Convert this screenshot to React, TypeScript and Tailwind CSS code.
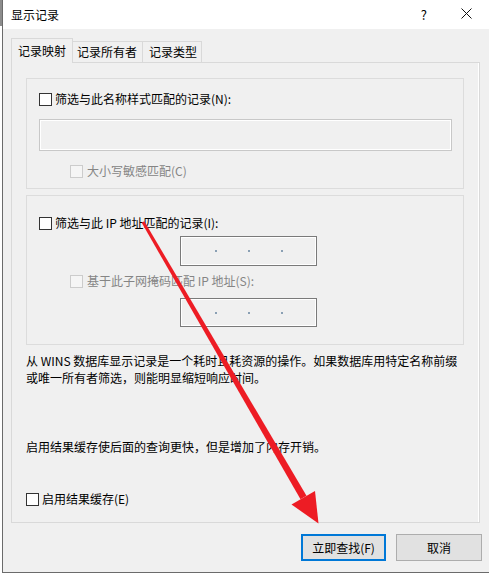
import React from "react";

function Check({ disabled = false }: { disabled?: boolean }) {
  return (
    <span
      className={
        disabled
          ? "block w-[13px] h-[13px] border border-[#cccccc] bg-[#f5f5f5] shrink-0"
          : "block w-[13px] h-[13px] border border-[#333333] bg-white shrink-0"
      }
    />
  );
}

function IpBox({ h }: { h: string }) {
  return (
    <div
      className={`w-[137px] ${h} border border-[#7a7a7a] bg-[#f0f0f0] shadow-[inset_0_0_0_1px_#ffffff] flex items-center`}
    >
      <span className="block w-[2px] h-[2px] bg-[#8aa0b4] ml-[34px]" />
      <span className="block w-[2px] h-[2px] bg-[#8aa0b4] ml-[31px]" />
      <span className="block w-[2px] h-[2px] bg-[#8aa0b4] ml-[31px]" />
    </div>
  );
}

export default function App() {
  return (
    <div className="relative w-[489px] h-[574px] bg-white overflow-hidden font-['Noto_Sans_CJK_SC','Noto_Sans',sans-serif] text-[12px] leading-[16px] text-black">
      <div className="flex h-[573px]">
        {/* background window sliver */}
        <div className="w-[2px] flex flex-col">
          <div className="h-[26px] bg-[#8c8c8c]" />
          <div className="flex-1 bg-white" />
        </div>
        {/* dialog */}
        <div className="flex-1 flex flex-col border-l border-b border-[#6b6b6b] bg-[#f0f0f0]">
          {/* title bar */}
          <div className="h-[29px] bg-white flex items-center pl-[8px] shrink-0">
            <span className="text-[12px]">显示记录</span>
            <span className="ml-auto text-[13px] mr-[34px]">?</span>
            <svg width="11" height="11" viewBox="0 0 11 11" className="mr-[17px] mb-[2px]">
              <path d="M0.5 0.5 L10.5 10.5 M10.5 0.5 L0.5 10.5" stroke="#111" strokeWidth="1" />
            </svg>
          </div>
          {/* body */}
          <div className="flex-1 flex flex-col pt-[9px] pl-[8px] pr-[9px]">
            {/* tabs */}
            <div className="flex items-end h-[24px] relative z-10">
              <div className="w-[62px] h-[25px] -mb-[1px] bg-[#f0f0f0] border-l border-t border-r border-[#d9d9d9] pl-[6px] flex items-center pb-[1px]">
                记录映射
              </div>
              <div className="w-[70px] h-[21px] border-t border-r border-[#d9d9d9] pl-[4px] flex items-center">
                记录所有者
              </div>
              <div className="w-[59px] h-[21px] border-t border-r border-[#d9d9d9] pl-[6px] flex items-center">
                记录类型
              </div>
            </div>
            {/* panel */}
            <div className="h-[461px] border border-[#d9d9d9] shadow-[inset_-1px_0_0_#ffffff] pt-[15px] pl-[14px] flex flex-col">
              {/* group 1 */}
              <div className="w-[438px] h-[111px] border border-[#dcdcdc] pt-[12px] pl-[12px] flex flex-col">
                <div className="flex items-center h-[16px]">
                  <Check />
                  <span className="ml-[3px] whitespace-nowrap">筛选与此名称样式匹配的记录(N):</span>
                </div>
                <div className="mt-[12px] w-[413px] h-[32px] border border-[#c8c8c8] shadow-[inset_0_0_0_1px_#ffffff] bg-[#f0f0f0]" />
                <div className="mt-[12px] flex items-center h-[16px] pl-[31px]">
                  <Check disabled />
                  <span className="ml-[4px] text-[#858585] whitespace-nowrap">大小写敏感匹配(C)</span>
                </div>
              </div>
              {/* group 2 */}
              <div className="mt-[6px] w-[438px] h-[150px] border border-[#dcdcdc] pt-[19px] pl-[12px] flex flex-col">
                <div className="flex items-center h-[16px]">
                  <Check />
                  <span className="ml-[3px] whitespace-nowrap">筛选与此 IP 地址匹配的记录(I):</span>
                </div>
                <div className="mt-[5px] pl-[141px]">
                  <IpBox h="h-[30px]" />
                </div>
                <div className="mt-[7px] flex items-center h-[16px] pl-[31px]">
                  <Check disabled />
                  <span className="ml-[4px] text-[#858585] whitespace-nowrap">基于此子网掩码匹配 IP 地址(S):</span>
                </div>
                <div className="mt-[9px] pl-[141px]">
                  <IpBox h="h-[29px]" />
                </div>
              </div>
              {/* description */}
              <div className="mt-[7px] leading-[17px] whitespace-nowrap">
                <div>从 WINS 数据库显示记录是一个耗时且耗资源的操作。如果数据库用特定名称前缀</div>
                <div>或唯一所有者筛选，则能明显缩短响应时间。</div>
              </div>
              <div className="mt-[52px] leading-[17px] whitespace-nowrap">
                启用结果缓存使后面的查询更快，但是增加了内存开销。
              </div>
              <div className="mt-[36px] flex items-center h-[16px]">
                <Check />
                <span className="ml-[3px] whitespace-nowrap">启用结果缓存(E)</span>
              </div>
            </div>
            {/* buttons */}
            <div className="mt-[11px] flex justify-end gap-[10px] -mr-[2px]">
              <button className="w-[85px] h-[27px] border-2 border-[#0078d7] bg-[#e1e1e1] flex items-center justify-center text-[12px]">
                立即查找(F)
              </button>
              <button className="w-[86px] h-[27px] border border-[#adadad] bg-[#e1e1e1] flex items-center justify-center text-[12px]">
                取消
              </button>
            </div>
          </div>
        </div>
      </div>
      {/* red annotation arrow */}
      <svg
        className="absolute left-0 top-0 pointer-events-none"
        width="489"
        height="574"
        viewBox="0 0 489 574"
      >
        <polygon
          points="144.3,221.2 141.7,222.8 300.5,499.3 306.5,495.7"
          fill="#ed1c24"
        />
        <polygon points="291.5,504.5 315,491 318.5,523.5" fill="#ed1c24" />
      </svg>
    </div>
  );
}
